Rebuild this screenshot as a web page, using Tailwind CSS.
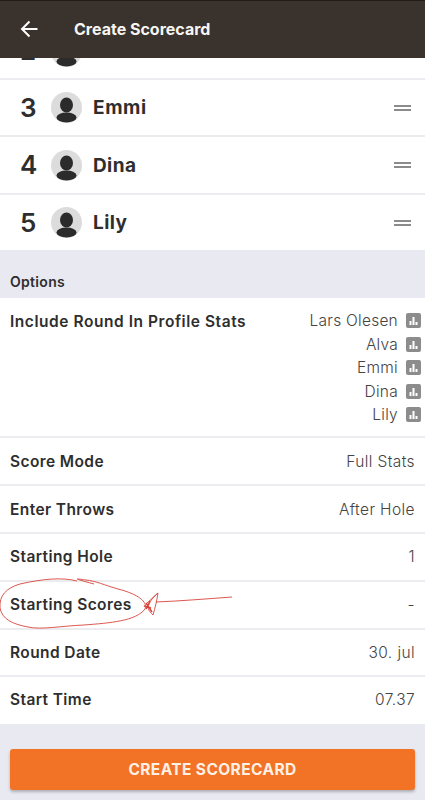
<!DOCTYPE html>
<html lang="en">
<head>
    <meta charset="UTF-8">
    <meta name="viewport" content="width=device-width, initial-scale=1.0">
    <title>Create Scorecard</title>
    <script src="https://cdn.jsdelivr.net/npm/@tailwindcss/browser@4"></script>
</head>
<body class="bg-[#e9e9f1] font-['Inter','Noto_Sans',sans-serif] text-[#2e2e2e]">
<div class="relative h-[800px] w-[425px] overflow-hidden">

    <!-- Header -->
    <header class="flex h-[58px] items-center border-t border-[#1f1b18] bg-[#3a322d] pl-[20px] pb-[1px]">
        <svg class="h-[18px] w-[18px]" viewBox="0 0 18 18" fill="none" stroke="#fff" stroke-width="2"><path d="M17.5 9H2M9.5 1.5 2 9l7.5 7.5"/></svg>
        <h1 class="ml-[36px] text-[16px] font-bold text-[#f7f5f2]">Create Scorecard</h1>
    </header>

    <!-- Players, scrolled so the second row is cut off -->
    <section class="bg-white">
        <div class="h-[22px] overflow-hidden border-b-2 border-[#ececf0]">
            <div class="mt-[-35px] flex h-[56px] items-center pl-[20px]">
                <span class="w-[16px] text-center text-[26px] font-semibold leading-none">2</span>
                <svg class="ml-[15px] h-[31px] w-[31px]" viewBox="0 0 31 31"><circle cx="15.5" cy="15.5" r="15.5" fill="#dcdcdc"/><ellipse cx="15.5" cy="13" rx="6.5" ry="7.5" fill="#2b2b2b"/><ellipse cx="15.5" cy="25.5" rx="10" ry="5" fill="#2b2b2b"/></svg>
            </div>
        </div>
        <div class="flex h-[57px] items-center border-b-2 border-[#ececf0] pl-[20px] pr-[14px]">
            <span class="w-[16px] text-center text-[26px] font-semibold leading-none">3</span>
            <svg class="ml-[15px] h-[31px] w-[31px]" viewBox="0 0 31 31"><circle cx="15.5" cy="15.5" r="15.5" fill="#dcdcdc"/><ellipse cx="15.5" cy="13" rx="6.5" ry="7.5" fill="#2b2b2b"/><ellipse cx="15.5" cy="25.5" rx="10" ry="5" fill="#2b2b2b"/></svg>
            <span class="ml-[11px] flex-1 pt-[2px] text-[19px] font-bold tracking-[0.6px]">Emmi</span>
            <div class="flex w-[17px] flex-col gap-[2px]"><div class="h-[2px] bg-[#8b8b8b]"></div><div class="h-[2px] bg-[#8b8b8b]"></div></div>
        </div>
        <div class="flex h-[58px] items-center border-b-2 border-[#ececf0] pl-[20px] pr-[14px]">
            <span class="w-[16px] text-center text-[26px] font-semibold leading-none">4</span>
            <svg class="ml-[15px] h-[31px] w-[31px]" viewBox="0 0 31 31"><circle cx="15.5" cy="15.5" r="15.5" fill="#dcdcdc"/><ellipse cx="15.5" cy="13" rx="6.5" ry="7.5" fill="#2b2b2b"/><ellipse cx="15.5" cy="25.5" rx="10" ry="5" fill="#2b2b2b"/></svg>
            <span class="ml-[11px] flex-1 pt-[2px] text-[19px] font-bold tracking-[0.4px]">Dina</span>
            <div class="flex w-[17px] flex-col gap-[2px]"><div class="h-[2px] bg-[#8b8b8b]"></div><div class="h-[2px] bg-[#8b8b8b]"></div></div>
        </div>
        <div class="flex h-[55px] items-center pl-[20px] pr-[14px]">
            <span class="w-[16px] text-center text-[26px] font-semibold leading-none">5</span>
            <svg class="ml-[15px] h-[31px] w-[31px]" viewBox="0 0 31 31"><circle cx="15.5" cy="15.5" r="15.5" fill="#dcdcdc"/><ellipse cx="15.5" cy="13" rx="6.5" ry="7.5" fill="#2b2b2b"/><ellipse cx="15.5" cy="25.5" rx="10" ry="5" fill="#2b2b2b"/></svg>
            <span class="ml-[11px] flex-1 pt-[2px] text-[19px] font-bold tracking-[0.4px]">Lily</span>
            <div class="flex w-[17px] flex-col gap-[2px]"><div class="h-[2px] bg-[#8b8b8b]"></div><div class="h-[2px] bg-[#8b8b8b]"></div></div>
        </div>
    </section>

    <!-- Options -->
    <div class="flex h-[48px] items-end pb-[6px] pl-[10px] text-[14px] font-semibold tracking-[0.3px]">Options</div>

    <section class="bg-white text-[15.5px] tracking-[0.4px]">
        <div class="flex h-[140px] items-start justify-between border-b-2 border-[#ececf0] pl-[10px] pr-[4px] pt-[11px]">
            <span class="mt-[1px] font-semibold leading-[24px] tracking-[0.55px]">Include Round In Profile Stats</span>
            <ul class="flex flex-col items-end font-light leading-[23.5px] tracking-[0.25px] text-[#444]">
                <li class="flex items-center gap-[8px]">Lars Olesen <svg class="h-[15px] w-[15px]" viewBox="0 0 15 15"><rect width="15" height="15" rx="2" fill="#8c8c8c"/><path d="M3.5 8h2v4h-2zM6.5 4h2v8h-2zM9.5 9h2v3h-2z" fill="#fff"/></svg></li>
                <li class="flex items-center gap-[8px]">Alva <svg class="h-[15px] w-[15px]" viewBox="0 0 15 15"><rect width="15" height="15" rx="2" fill="#8c8c8c"/><path d="M3.5 8h2v4h-2zM6.5 4h2v8h-2zM9.5 9h2v3h-2z" fill="#fff"/></svg></li>
                <li class="flex items-center gap-[8px]">Emmi <svg class="h-[15px] w-[15px]" viewBox="0 0 15 15"><rect width="15" height="15" rx="2" fill="#8c8c8c"/><path d="M3.5 8h2v4h-2zM6.5 4h2v8h-2zM9.5 9h2v3h-2z" fill="#fff"/></svg></li>
                <li class="flex items-center gap-[8px]">Dina <svg class="h-[15px] w-[15px]" viewBox="0 0 15 15"><rect width="15" height="15" rx="2" fill="#8c8c8c"/><path d="M3.5 8h2v4h-2zM6.5 4h2v8h-2zM9.5 9h2v3h-2z" fill="#fff"/></svg></li>
                <li class="flex items-center gap-[8px]">Lily <svg class="h-[15px] w-[15px]" viewBox="0 0 15 15"><rect width="15" height="15" rx="2" fill="#8c8c8c"/><path d="M3.5 8h2v4h-2zM6.5 4h2v8h-2zM9.5 9h2v3h-2z" fill="#fff"/></svg></li>
            </ul>
        </div>
        <div class="flex h-[48px] items-center justify-between border-b-2 border-[#ececf0] pl-[10px] pr-[10px] pt-[1px]"><span class="font-semibold">Score Mode</span><span class="font-light text-[#444]">Full Stats</span></div>
        <div class="flex h-[48px] items-center justify-between border-b-2 border-[#ececf0] pl-[10px] pr-[10px] pt-[1px]"><span class="font-semibold">Enter Throws</span><span class="font-light text-[#444]">After Hole</span></div>
        <div class="flex h-[48px] items-center justify-between border-b-2 border-[#ececf0] pl-[10px] pr-[10px] pb-[1px]"><span class="font-semibold">Starting Hole</span><span class="font-light text-[#444]">1</span></div>
        <div class="flex h-[48px] items-center justify-between border-b-2 border-[#ececf0] pl-[10px] pr-[10px] pb-[1px]"><span class="font-semibold">Starting Scores</span><span class="font-light text-[#444]">-</span></div>
        <div class="flex h-[47px] items-center justify-between border-b-2 border-[#ececf0] pl-[10px] pr-[10px]"><span class="font-semibold">Round Date</span><span class="font-light text-[#444]">30. jul</span></div>
        <div class="flex h-[47px] items-center justify-between pl-[10px] pr-[10px] pb-[2px]"><span class="font-semibold">Start Time</span><span class="font-light text-[#444]">07.37</span></div>
    </section>

    <!-- Create button -->
    <div class="px-[10px] pt-[25px]">
        <button class="h-[41px] w-full rounded-[3px] bg-[#f37326] text-[15.5px] font-bold tracking-[0.4px] text-[#fdf1e6] shadow-[0_2px_3px_rgba(0,0,0,0.25)]">CREATE SCORECARD</button>
    </div>

    <!-- Red pen annotation drawn over the screenshot -->
    <svg class="absolute left-0 top-[570px] h-[70px] w-[250px]" viewBox="0 0 250 70" fill="none" stroke="#d8453c" stroke-width="0.9">
        <path d="M77 11C62 7 42 9 20 14C6 18-1 26 0 38C2 49 12 54 28 57C42 60 60 56 84 55C110 53 136 51 145 39C148 32 138 24 118 19C104 15 96 11 86 10C78 9 68 7 94 14"/>
        <path d="M147 33L158 23C153 27 149 32 148 38C149 41 151 43 153 45C155 38 157 30 158 23"/>
        <path d="M146 33L152 42M144 36L151 38M146 39L150 31" stroke-width="1.4"/>
        <path d="M156 32C180 31 205 29 232 27"/>
    </svg>
</div>
</body>
</html>
